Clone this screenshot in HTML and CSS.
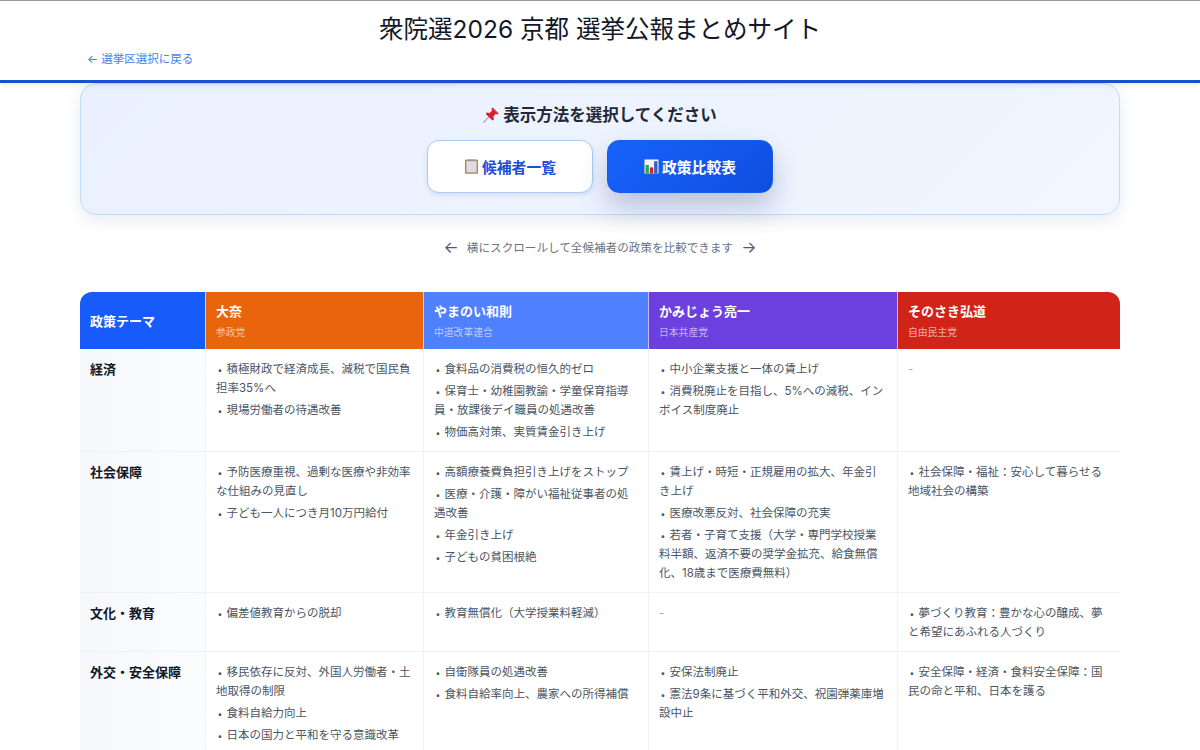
FILE: index.html
```html
<!DOCTYPE html>
<html lang="ja">
<head>
<meta charset="utf-8">
<title>衆院選2026 京都 選挙公報まとめサイト</title>
<link rel="stylesheet" href="styles.css">
</head>
<body>
<header class="site-header">
  <h1 class="site-title">衆院選2026 京都 選挙公報まとめサイト</h1>
  <div class="back-row"><a class="back-link" href="#">← 選挙区選択に戻る</a></div>
</header>
<main class="container">
  <section class="mode-panel">
    <h2 class="mode-title">
      <svg class="emoji emoji-pin" viewBox="0 0 16 16" aria-hidden="true"><path d="M0.4 15.6 6.4 9.4" stroke="#9aa3ad" stroke-width="1.1" fill="none"/><path d="M9.6 0.4 15.6 6.2 14.2 7.6 12.6 6.9 10.4 9.6 10.9 12.6 9.4 13.4 2.8 6.9 3.6 5.5 6.6 6 9.2 3.6 8.4 1.9Z" fill="#d3222c"/><path d="M9.9 1.6 14.2 5.8" stroke="#ef6268" stroke-width="0.9" fill="none"/></svg>
      表示方法を選択してください
    </h2>
    <div class="mode-buttons">
      <button class="mode-btn" type="button">
        <svg class="emoji" viewBox="0 0 16 16" aria-hidden="true"><rect x="1" y="0.6" width="14" height="15.2" rx="1" fill="#b08a60"/><rect x="2.6" y="2.2" width="10.8" height="12" fill="#dcdde0"/><rect x="4.5" y="0.4" width="7" height="2" rx="0.5" fill="#9a9a98"/></svg>
        候補者一覧
      </button>
      <button class="mode-btn mode-btn-active" type="button">
        <svg class="emoji" viewBox="0 0 16 16" aria-hidden="true"><rect x="0.5" y="0.5" width="15" height="15" fill="#f2f4f7"/><rect x="1.6" y="6.4" width="3.6" height="9.1" fill="#2ea64e"/><rect x="6.2" y="9" width="3.6" height="6.5" fill="#cf2630"/><rect x="10.8" y="2.4" width="3.6" height="13.1" fill="#2f62c8"/></svg>
        政策比較表
      </button>
    </div>
  </section>

  <p class="scroll-hint"><span class="hint-arrow">←</span><span>横にスクロールして全候補者の政策を比較できます</span><span class="hint-arrow">→</span></p>

  <div class="table-wrap">
    <table class="policy-table">
      <colgroup>
        <col class="col-theme"><col class="col-a"><col class="col-b"><col class="col-c"><col class="col-d">
      </colgroup>
      <thead>
        <tr>
          <th class="th-theme">政策テーマ</th>
          <th class="th-sanseito"><span class="cand-name">大奈</span><span class="cand-party">参政党</span></th>
          <th class="th-chudo"><span class="cand-name">やまのい和則</span><span class="cand-party">中道改革連合</span></th>
          <th class="th-jcp"><span class="cand-name">かみじょう亮一</span><span class="cand-party">日本共産党</span></th>
          <th class="th-ldp"><span class="cand-name">そのさき弘道</span><span class="cand-party">自由民主党</span></th>
        </tr>
      </thead>
      <tbody>
        <tr>
          <th class="row-theme" scope="row">経済</th>
          <td><ul><li>積極財政で経済成長、減税で国民負担率35%へ</li><li>現場労働者の待遇改善</li></ul></td>
          <td><ul><li>食料品の消費税の恒久的ゼロ</li><li>保育士・幼稚園教諭・学童保育指導員・放課後デイ職員の処遇改善</li><li>物価高対策、実質賃金引き上げ</li></ul></td>
          <td><ul><li>中小企業支援と一体の賃上げ</li><li>消費税廃止を目指し、5%への減税、インボイス制度廃止</li></ul></td>
          <td><span class="empty">-</span></td>
        </tr>
        <tr>
          <th class="row-theme" scope="row">社会保障</th>
          <td><ul><li>予防医療重視、過剰な医療や非効率な仕組みの見直し</li><li>子ども一人につき月10万円給付</li></ul></td>
          <td><ul><li>高額療養費負担引き上げをストップ</li><li>医療・介護・障がい福祉従事者の処遇改善</li><li>年金引き上げ</li><li>子どもの貧困根絶</li></ul></td>
          <td><ul><li>賃上げ・時短・正規雇用の拡大、年金引き上げ</li><li>医療改悪反対、社会保障の充実</li><li>若者・子育て支援（大学・専門学校授業料半額、返済不要の奨学金拡充、給食無償化、18歳まで医療費無料）</li></ul></td>
          <td><ul><li>社会保障・福祉：安心して暮らせる地域社会の構築</li></ul></td>
        </tr>
        <tr>
          <th class="row-theme" scope="row">文化・教育</th>
          <td><ul><li>偏差値教育からの脱却</li></ul></td>
          <td><ul><li>教育無償化（大学授業料軽減）</li></ul></td>
          <td><span class="empty">-</span></td>
          <td><ul><li>夢づくり教育：豊かな心の醸成、夢と希望にあふれる人づくり</li></ul></td>
        </tr>
        <tr>
          <th class="row-theme" scope="row">外交・安全保障</th>
          <td><ul><li>移民依存に反対、外国人労働者・土地取得の制限</li><li>食料自給力向上</li><li>日本の国力と平和を守る意識改革</li></ul></td>
          <td><ul><li>自衛隊員の処遇改善</li><li>食料自給率向上、農家への所得補償</li></ul></td>
          <td><ul><li>安保法制廃止</li><li>憲法9条に基づく平和外交、祝園弾薬庫増設中止</li></ul></td>
          <td><ul><li>安全保障・経済・食料安全保障：国民の命と平和、日本を護る</li></ul></td>
        </tr>
      </tbody>
    </table>
  </div>
</main>
</body>
</html>
```

FILE: styles.css
```css
* { box-sizing: border-box; }

html, body {
  margin: 0;
  padding: 0;
  height: 100%;
  overflow: hidden;
}

body {
  background: #fff;
  color: #1f2937;
  font-family: Inter, "Noto Sans CJK JP", sans-serif;
  border-top: 1px solid #9a9a9a;
}

.site-header {
  position: relative;
  z-index: 2;
  height: 82px;
  padding: 12px 87px 0;
  background: #fff;
  border-bottom: 3px solid #1a50d0;
  box-shadow: 0 2px 6px rgba(15, 40, 90, 0.1);
}

.site-title {
  margin: 0;
  font-size: 24.5px;
  line-height: 32px;
  font-weight: 400;
  text-align: center;
  color: #111827;
}

.back-row { margin-top: 2px; }

.back-link {
  font-size: 11.5px;
  line-height: 18px;
  color: #4a80ea;
  text-decoration: none;
}

.container {
  width: 1040px;
  margin: 0 auto;
}

.mode-panel {
  height: 132px;
  padding: 20px 0 0;
  background: linear-gradient(135deg, #e9f0fe, #f1f6ff);
  border: 1.5px solid #bfdcf9;
  border-radius: 16px;
  box-shadow: 0 6px 16px rgba(30, 60, 120, 0.1);
}

.mode-title {
  display: flex;
  align-items: center;
  justify-content: center;
  gap: 4px;
  margin: 0;
  font-size: 16.5px;
  line-height: 22px;
  font-weight: 700;
  color: #1f2937;
}

.mode-buttons {
  display: flex;
  justify-content: center;
  gap: 14px;
  margin-top: 14px;
}

.mode-btn {
  display: flex;
  align-items: center;
  justify-content: center;
  gap: 3px;
  width: 166px;
  height: 53px;
  padding: 0;
  font-family: inherit;
  font-size: 14.8px;
  font-weight: 700;
  color: #1d4ed8;
  background: #fff;
  border: 1.5px solid #a5cdf7;
  border-radius: 12px;
  box-shadow: 0 2px 5px rgba(30, 60, 120, 0.12);
}

.mode-btn-active {
  color: #fff;
  background: linear-gradient(135deg, #1763fa, #0f4ee0);
  border-color: #145bf0;
  box-shadow: 0 14px 28px rgba(30, 50, 110, 0.26);
}

.emoji {
  display: block;
  width: 15px;
  height: 15px;
  flex: none;
}

.emoji-pin {
  width: 16px;
  height: 16px;
}

.scroll-hint {
  display: flex;
  align-items: center;
  justify-content: center;
  gap: 8px;
  height: 20px;
  margin: 22px 0 35px;
  font-size: 11.6px;
  color: #6b7280;
}

.hint-arrow {
  font-size: 16px;
  color: #555b66;
}

.table-wrap {
  border-radius: 12px 12px 0 0;
  overflow: hidden;
}

.policy-table {
  width: 1040px;
  table-layout: fixed;
  border-collapse: separate;
  border-spacing: 0;
}

.col-theme { width: 125px; }
.col-a { width: 218px; }
.col-b { width: 225px; }
.col-c { width: 249px; }
.col-d { width: 223px; }

.policy-table thead th {
  height: 57px;
  padding: 0 11px 0 10px;
  text-align: left;
  vertical-align: middle;
  color: #fff;
  border-left: 1px solid rgba(255, 255, 255, 0.65);
}

.policy-table thead th:first-child {
  border-left: 0;
}

.th-theme { background: #175cfa; font-size: 13px; font-weight: 700; }
.th-sanseito { background: #e9650c; }
.th-chudo { background: #4f80fd; }
.th-jcp { background: #6c40de; }
.th-ldp { background: #d12419; }

.cand-name {
  display: block;
  font-size: 13px;
  line-height: 20px;
  font-weight: 700;
}

.cand-party {
  display: block;
  margin-top: 5px;
  font-size: 9.8px;
  line-height: 14px;
  font-weight: 400;
  color: rgba(255, 255, 255, 0.62);
}

.policy-table tbody th,
.policy-table tbody td {
  padding: 11px 11px 9px 10px;
  vertical-align: top;
  text-align: left;
  border-bottom: 1px solid #eef1f5;
}

.policy-table tbody td {
  border-left: 1px solid #f0f2f6;
  font-size: 11.5px;
  line-height: 19px;
  color: #4b5563;
}

.policy-table tbody .row-theme {
  padding-top: 10px;
  font-size: 13px;
  line-height: 20px;
  font-weight: 700;
  color: #111827;
  background: linear-gradient(90deg, #f6f8fb, #fbfcfe);
}

.policy-table ul {
  list-style: none;
  margin: 0;
  padding: 0;
}

.policy-table li + li { margin-top: 3px; }

.policy-table li::before {
  content: "•";
  display: inline-block;
  width: 9px;
  font-size: 8.5px;
  line-height: 1;
  padding-left: 1.5px;
}

.empty { color: #a8afb9; }
```
